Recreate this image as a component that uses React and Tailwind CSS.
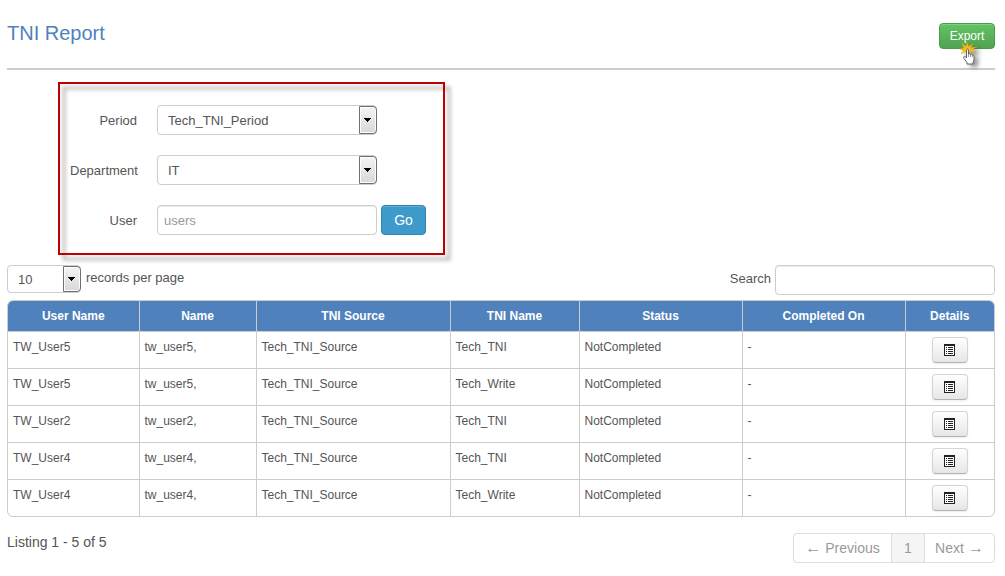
const columns = [
  { name: 'User Name', width: 'w-[131px]' },
  { name: 'Name', width: 'w-[117px]' },
  { name: 'TNI Source', width: 'w-[194px]' },
  { name: 'TNI Name', width: 'w-[129px]' },
  { name: 'Status', width: 'w-[163px]' },
  { name: 'Completed On', width: 'w-[163px]' },
  { name: 'Details', width: 'w-[89px]' },
];

const rows = [
  ['TW_User5', 'tw_user5,', 'Tech_TNI_Source', 'Tech_TNI', 'NotCompleted', '-'],
  ['TW_User5', 'tw_user5,', 'Tech_TNI_Source', 'Tech_Write', 'NotCompleted', '-'],
  ['TW_User2', 'tw_user2,', 'Tech_TNI_Source', 'Tech_TNI', 'NotCompleted', '-'],
  ['TW_User4', 'tw_user4,', 'Tech_TNI_Source', 'Tech_TNI', 'NotCompleted', '-'],
  ['TW_User4', 'tw_user4,', 'Tech_TNI_Source', 'Tech_Write', 'NotCompleted', '-'],
];

function Select({ id, options, className, ...rest }) {
  return (
    <div className={`relative ${className}`}>
      <select
        id={id}
        className="h-full w-full appearance-none rounded border border-[#ccc] bg-white pt-0.5 pr-5 pl-2.5 text-[13px] text-[#555]"
        {...rest}
      >
        {options.map((option) => (
          <option key={option}>{option}</option>
        ))}
      </select>
      <span className="pointer-events-none absolute inset-y-px right-0 flex w-[18px] items-center justify-center rounded-r-sm border border-[#707070] bg-linear-to-b from-[#f4f4f4] to-[#d8d8d8] pr-px shadow-[inset_0_0_0_1px_#fcfcfc]">
        <svg width="7" height="4" viewBox="0 0 7 4" aria-hidden="true">
          <path d="M0 0h7v1H6v1H5v1H4v1H3V3H2V2H1V1H0z" fill="#000" />
        </svg>
      </span>
    </div>
  );
}

function ListIcon() {
  return (
    <svg width="11" height="12" viewBox="0 0 11 12" shapeRendering="crispEdges" aria-hidden="true">
      <path d="M0 0h11v12H0z" fill="#222" />
      <path d="M1 2h9v9H1z" fill="#fff" />
      <path d="M2 3h1v1H2zM4 3h5v1H4zM2 5h1v1H2zM4 5h5v1H4zM2 7h1v1H2zM4 7h5v1H4zM2 9h1v1H2zM4 9h5v1H4z" fill="#222" />
    </svg>
  );
}

function ClickPointer() {
  return (
    <svg
      className="pointer-events-none absolute top-4 left-5 drop-shadow-[4px_3px_2px_rgba(0,0,0,0.4)]"
      width="20"
      height="30"
      viewBox="0 0 20 30"
      aria-hidden="true"
    >
      <path
        d="M2.500 4L7 7.500 8 3.500 9.800 7.500 14 4.500 12 8.500 18 8 13 10.500 17 14 11.500 12.500 8.500 14 6 12.500 2 15 4.500 11.500 0.500 10 5 9z"
        fill="#f5b820"
        stroke="#e0a013"
        strokeWidth=".4"
      />
      <path
        d="M7.500 19V11.500q0-1.500 1-1.500t1 1.500V15q1.500-.8 2 .5 1.400-.7 1.800.6 1.500-.4 1.700 1.200V21l-1 2.500V25H8v-1.500L5 19.500q-1-1.700.3-2.100 1.200 0 2.200 1.600z"
        fill="#fff"
        stroke="#555"
        strokeWidth=".9"
      />
      <path d="M9.500 15v3M11.500 15.500V18M13.300 16v2.500" stroke="#777" strokeWidth=".7" />
    </svg>
  );
}

const inputStyle =
  'h-[30px] w-[220px] rounded border border-[#ccc] bg-white px-1.5 text-[13px] text-[#555] shadow-[inset_0_1px_1px_rgba(0,0,0,0.075)] placeholder:text-[#999]';

const labelStyle = 'w-[67px] pt-0.5 text-right';

export default function App() {
  return (
    <main
      className="bg-white pr-2.5 pl-[7px] text-[13px] leading-5 text-[#555]"
      style={{ fontFamily: '"Liberation Sans", Arial, sans-serif' }}
    >
      <header className="flex items-start justify-between border-b-2 border-[#ccc] pt-[23px] pb-[19px]">
        <h1 className="text-xl leading-5 text-[#4f81bd]">TNI Report</h1>
        <div className="relative">
          <button
            type="button"
            className="block h-[26px] w-14 rounded border border-[#4a9c4a] bg-linear-to-b from-[#62c462] to-[#51a351] text-xs text-white shadow-[inset_0_1px_0_rgba(255,255,255,0.2)]"
          >
            Export
          </button>
          <ClickPointer />
        </div>
      </header>

      <form
        className="relative mt-3 ml-[51px] flex w-fit flex-col gap-5 pt-[23px] pr-[19px] pb-5 pl-3 before:pointer-events-none before:absolute before:inset-0 before:border-2 before:border-[#c00000] before:drop-shadow-[5px_5px_2px_rgba(0,0,0,0.4)]"
        onSubmit={(event) => event.preventDefault()}
      >
        <div className="flex items-center gap-5">
          <label htmlFor="period" className={labelStyle}>Period</label>
          <Select id="period" options={['Tech_TNI_Period']} className="h-[30px] w-[220px]" />
        </div>
        <div className="flex items-center gap-5">
          <label htmlFor="department" className={labelStyle}>Department</label>
          <Select id="department" options={['IT']} className="h-[30px] w-[220px]" />
        </div>
        <div className="flex items-center gap-5">
          <label htmlFor="user" className={labelStyle}>User</label>
          <div className="flex gap-1">
            <input id="user" type="text" placeholder="users" className={inputStyle} />
            <button
              type="submit"
              className="h-[30px] w-[45px] rounded border border-[#2f84b3] bg-[#3d9acb] text-sm text-white shadow-[inset_0_1px_0_rgba(255,255,255,0.2)]"
            >
              Go
            </button>
          </div>
        </div>
      </form>

      <div className="mt-2.5 flex items-start justify-between">
        <div className="flex items-center gap-[5px]">
          <Select id="page-size" options={['10']} className="h-7 w-[74px]" />
          <label htmlFor="page-size" className="pb-0.5">records per page</label>
        </div>
        <div className="flex items-center gap-1">
          <label htmlFor="search" className="pb-0.5">Search</label>
          <input id="search" type="search" className={inputStyle} />
        </div>
      </div>

      <div className="mt-[5px] overflow-hidden rounded-md border border-[#ccc]">
        <table className="w-full table-fixed border-collapse text-xs leading-5">
          <thead>
            <tr className="h-[30px] border-b border-[#ccc] bg-[#4f81bd] text-white">
              {columns.map((column) => (
                <th key={column.name} className={`${column.width} border-l border-[#ccc] p-0 font-bold first:border-l-0`}>
                  {column.name}
                </th>
              ))}
            </tr>
          </thead>
          <tbody>
            {rows.map((row, index) => (
              <tr key={index} className="h-[37px] border-b border-[#ccc] last:border-b-0">
                {row.map((cell, cellIndex) => (
                  <td key={cellIndex} className="border-l border-[#ccc] px-[5px] pt-[5px] align-top first:border-l-0">
                    {cell}
                  </td>
                ))}
                <td className="border-l border-[#ccc] text-center">
                  <button
                    type="button"
                    aria-label="Details"
                    className="inline-flex h-[26px] w-9 items-center justify-center rounded border border-[#d4d4d4] border-b-[#b3b3b3] bg-linear-to-b from-white to-[#e6e6e6] align-middle shadow-[0_1px_2px_rgba(0,0,0,0.08)]"
                  >
                    <ListIcon />
                  </button>
                </td>
              </tr>
            ))}
          </tbody>
        </table>
      </div>

      <footer className="flex items-start justify-between pt-4 text-sm">
        <p className="leading-[18px]">Listing 1 - 5 of 5</p>
        <nav
          aria-label="Pagination"
          className="flex h-[30px] overflow-hidden rounded border border-[#ddd] text-[#999] shadow-[0_1px_2px_rgba(0,0,0,0.05)]"
        >
          <a href="#previous" className="flex w-[97px] items-center justify-center gap-1">
            <span className="text-base">←</span> Previous
          </a>
          <a href="#page-1" aria-current="page" className="flex w-[34px] items-center justify-center border-x border-[#ddd] bg-[#f5f5f5]">1</a>
          <a href="#next" className="flex w-[69px] items-center justify-center gap-1">
            Next <span className="text-base">→</span>
          </a>
        </nav>
      </footer>
    </main>
  );
}
